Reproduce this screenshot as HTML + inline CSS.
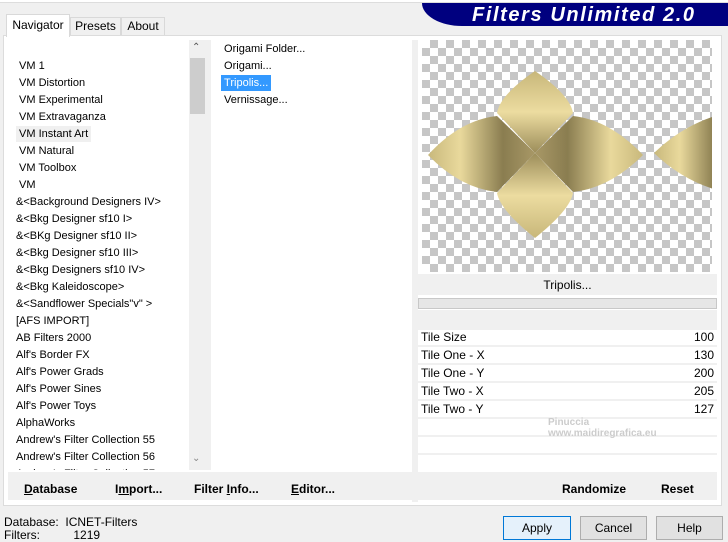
<!DOCTYPE html>
<html><head><style>
*{margin:0;padding:0;box-sizing:border-box}
body{width:728px;height:539px;background:#f0f0f0;font-family:"Liberation Sans",sans-serif;font-size:11px;color:#000;position:relative;overflow:hidden}
.a{position:absolute}
.list div{height:17px;line-height:17px;white-space:nowrap}
.tab{position:absolute;top:17px;height:18px;border:1px solid #d9d9d9;border-bottom:none;background:#f0f0f0;text-align:center;line-height:17px}
.b{font-weight:bold;font-size:12px}
.btn{position:absolute;top:516px;height:24px;border:1px solid #adadad;background:#e1e1e1;text-align:center;line-height:22px;font-size:12px}
.row{position:absolute;left:418px;width:299px;height:18px;line-height:17px;border-bottom:2px solid #f0f0f0;font-size:12px}
.row span{position:absolute;right:3px}
.row b{font-weight:normal;position:absolute;left:3px}
</style></head><body>
<div class="a" style="left:0;top:0;width:728px;height:3px;background:#fff;border-bottom:1px solid #ddd"></div>
<div class="a" style="left:422px;top:3px;width:306px;height:23px;background:#00007f;border-radius:0 0 0 40px/0 0 0 23px"></div>
<div class="a" style="left:472px;top:4px;color:#fff;font-weight:bold;font-style:italic;font-size:20px;letter-spacing:1.6px">Filters Unlimited 2.0</div>

<div class="a" style="left:3px;top:35px;width:719px;height:471px;background:#fff;border:1px solid #dcdcdc"></div>
<div class="tab" style="left:70px;width:51px;font-size:12px">Presets</div>
<div class="tab" style="left:121px;width:44px;font-size:12px">About</div>
<div class="tab" style="left:6px;top:14px;height:23px;width:64px;background:#fff;line-height:20px;font-size:12px">Navigator</div>

<div class="a" style="left:8px;top:40px;width:198px;height:430px;background:#fff;overflow:hidden">
<div class="list a" style="left:8px;top:18px">
<div>&nbsp;VM 1</div><div>&nbsp;VM Distortion</div><div>&nbsp;VM Experimental</div><div>&nbsp;VM Extravaganza</div>
<div><span style="background:#f0f0f0;padding:2px 3px 2px 0">&nbsp;VM Instant Art</span></div><div>&nbsp;VM Natural</div><div>&nbsp;VM Toolbox</div><div>&nbsp;VM</div>
<div>&amp;&lt;Background Designers IV&gt;</div><div>&amp;&lt;Bkg Designer sf10 I&gt;</div><div>&amp;&lt;BKg Designer sf10 II&gt;</div>
<div>&amp;&lt;Bkg Designer sf10 III&gt;</div><div>&amp;&lt;Bkg Designers sf10 IV&gt;</div><div>&amp;&lt;Bkg Kaleidoscope&gt;</div>
<div>&amp;&lt;Sandflower Specials"v" &gt;</div><div>[AFS IMPORT]</div><div>AB Filters 2000</div><div>Alf's Border FX</div>
<div>Alf's Power Grads</div><div>Alf's Power Sines</div><div>Alf's Power Toys</div><div>AlphaWorks</div>
<div>Andrew's Filter Collection 55</div><div>Andrew's Filter Collection 56</div><div>Andrew's Filter Collection 57</div>
</div>
<div class="a" style="left:181px;top:0;width:17px;height:430px;background:#f0f0f0"></div>
<div class="a" style="left:182px;top:18px;width:15px;height:56px;background:#cdcdcd"></div>
<div class="a" style="left:184px;top:2px;font-size:10px;color:#555">&#8963;</div>
<div class="a" style="left:184px;top:413px;font-size:10px;color:#888">&#8964;</div>
</div>
<div class="a" style="left:206px;top:40px;width:5px;height:430px;background:#f0f0f0"></div>
<div class="a" style="left:211px;top:40px;width:201px;height:430px;background:#fff"></div>
<div class="list a" style="left:221px;top:41px">
<div>&nbsp;Origami Folder...</div><div>&nbsp;Origami...</div>
<div><span style="background:#3399ff;color:#fff;padding:2px 3px 2px 0">&nbsp;Tripolis...</span></div><div>&nbsp;Vernissage...</div>
</div>
<div class="a" style="left:412px;top:40px;width:6px;height:462px;background:#f0f0f0"></div>

<div class="a" style="left:8px;top:472px;width:404px;height:28px;background:#f0f0f0"></div>
<div class="a b" style="left:24px;top:482px"><u>D</u>atabase</div>
<div class="a b" style="left:115px;top:482px">I<u>m</u>port...</div>
<div class="a b" style="left:194px;top:482px">Filter <u>I</u>nfo...</div>
<div class="a b" style="left:291px;top:482px"><u>E</u>ditor...</div>

<div class="a" style="left:422px;top:40px;width:290px;height:232px;background-color:#fff;background-image:linear-gradient(45deg,#c6c6c6 25%,transparent 25%,transparent 75%,#c6c6c6 75%),linear-gradient(45deg,#c6c6c6 25%,transparent 25%,transparent 75%,#c6c6c6 75%);background-size:16px 16px;background-position:0 0,8px 8px"></div>
<svg class="a" style="left:0;top:0" width="728" height="539">
<defs>
<linearGradient id="h" x1="0" x2="1"><stop offset="0" stop-color="#c8b87c"/><stop offset="0.3" stop-color="#e9d99c"/><stop offset="0.7" stop-color="#8a7d50"/><stop offset="1" stop-color="#a89866"/></linearGradient>
<linearGradient id="h2" x1="1" x2="0"><stop offset="0" stop-color="#c8b87c"/><stop offset="0.3" stop-color="#e9d99c"/><stop offset="0.7" stop-color="#8a7d50"/><stop offset="1" stop-color="#a89866"/></linearGradient>
<linearGradient id="v" x1="0" y1="0" x2="0" y2="1"><stop offset="0" stop-color="#c8b77a"/><stop offset="0.5" stop-color="#ecdca0"/><stop offset="1" stop-color="#9c8d5a"/></linearGradient>
<linearGradient id="v2" x1="0" y1="1" x2="0" y2="0"><stop offset="0" stop-color="#c8b77a"/><stop offset="0.5" stop-color="#ecdca0"/><stop offset="1" stop-color="#9c8d5a"/></linearGradient>
</defs>
<clipPath id="c"><rect x="422" y="40" width="290" height="232"/></clipPath>
<g clip-path="url(#c)">
<path d="M428 155 Q460 120 497 116 L535 153 L497 192 Q460 188 428 155Z" fill="url(#h)"/>
<path d="M643 155 Q610 120 573 116 L535 153 L573 192 Q610 188 643 155Z" fill="url(#h2)"/>
<path d="M535 71 Q500 95 497 113 L535 153 L573 113 Q570 95 535 71Z" fill="url(#v)"/>
<path d="M535 238 Q500 210 497 193 L535 153 L573 193 Q570 210 535 238Z" fill="url(#v2)"/>
<path d="M654 153 Q690 118 740 110 L740 195 Q690 188 654 153Z" fill="url(#h)"/>
</g>
</svg>
<div class="a" style="left:418px;top:274px;width:299px;height:21px;background:#f0f0f0;text-align:center;line-height:23px;font-size:12px">Tripolis...</div>
<div class="a" style="left:418px;top:298px;width:299px;height:11px;background:#e6e6e6;border:1px solid #c8c8c8"></div>
<div class="a" style="left:418px;top:310px;width:299px;height:20px;background:#f0f0f0"></div>
<div class="row" style="top:329px"><b>Tile Size</b><span>100</span></div>
<div class="row" style="top:347px"><b>Tile One - X</b><span>130</span></div>
<div class="row" style="top:365px"><b>Tile One - Y</b><span>200</span></div>
<div class="row" style="top:383px"><b>Tile Two - X</b><span>205</span></div>
<div class="row" style="top:401px"><b>Tile Two - Y</b><span>127</span></div>
<div class="row" style="top:419px"></div><div class="row" style="top:437px"></div>
<div class="a" style="left:548px;top:417px;color:#ccc;font-size:10px;font-weight:bold">Pinuccia<br>www.maidiregrafica.eu</div>
<div class="a" style="left:418px;top:472px;width:299px;height:28px;background:#f0f0f0"></div>
<div class="a b" style="left:562px;top:482px">Randomize</div>
<div class="a b" style="left:661px;top:482px">Reset</div>

<div class="a" style="left:4px;top:516px;line-height:13px;font-size:12px">Database:&nbsp;&nbsp;ICNET-Filters<br>Filters:&nbsp;&nbsp;&nbsp;&nbsp;&nbsp;&nbsp;&nbsp;&nbsp;&nbsp;&nbsp;1219</div>
<div class="btn" style="left:503px;width:68px;border-color:#0078d7;background:#e5f1fb">Apply</div>
<div class="btn" style="left:580px;width:67px">Cancel</div>
<div class="btn" style="left:656px;width:67px">Help</div>
</body></html>
